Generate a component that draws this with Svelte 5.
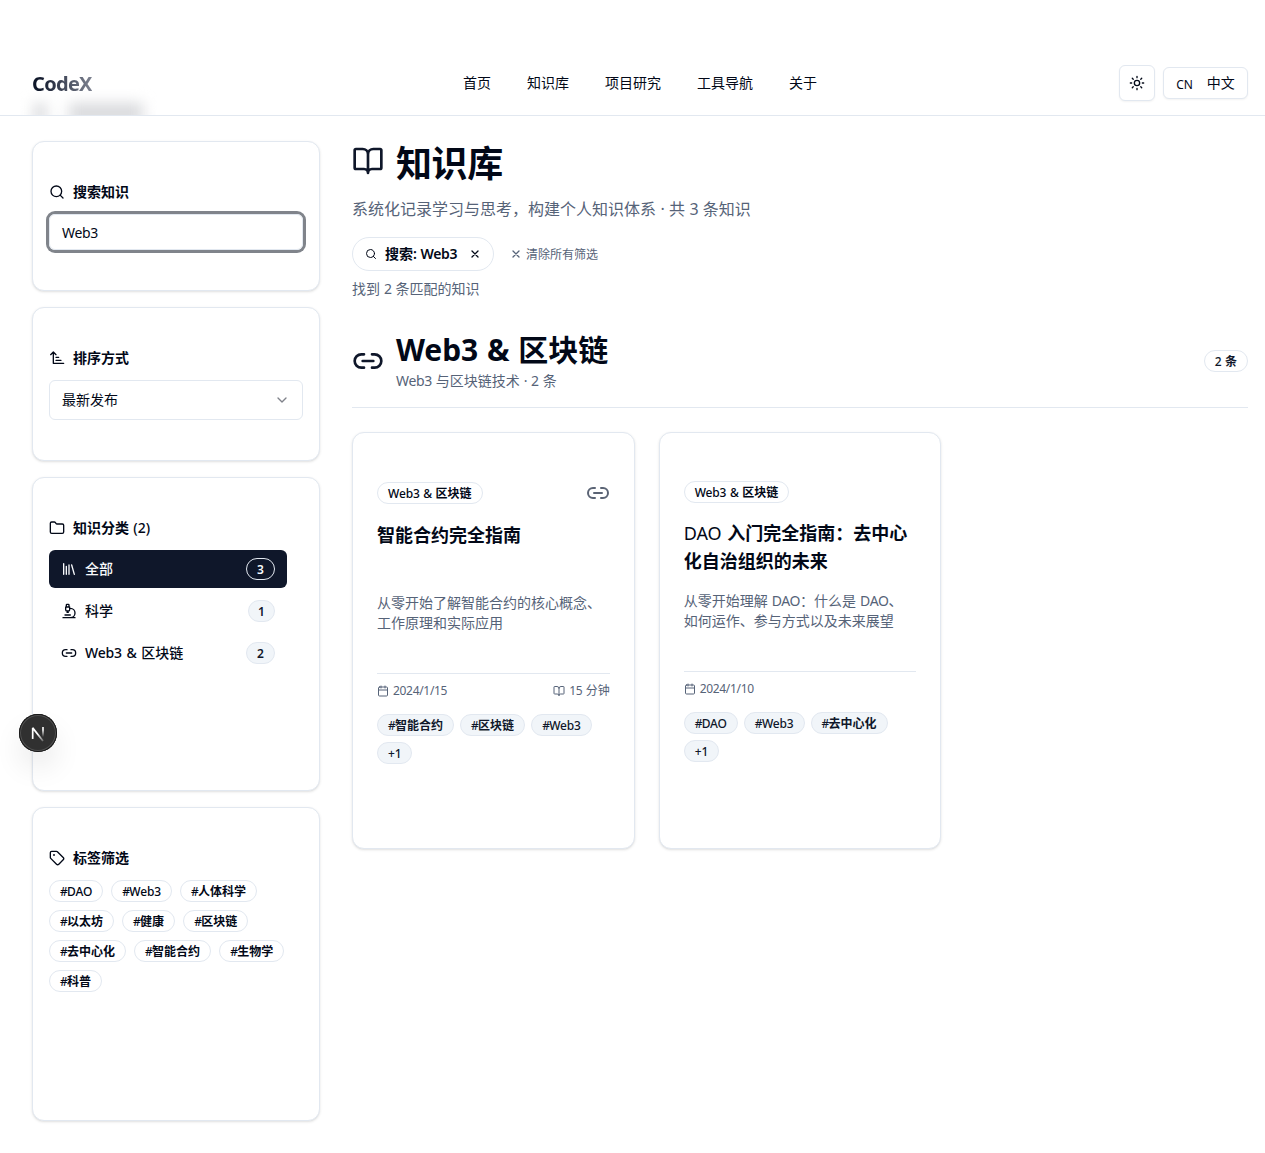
<script>
  const nav = ['首页', '知识库', '项目研究', '工具导航', '关于'];
  const categories = [
    { icon: 'library', label: '全部', count: '3', active: true },
    { icon: 'microscope', label: '科学', count: '1' },
    { icon: 'link', label: 'Web3 & 区块链', count: '2' }
  ];
  const tags = ['#DAO', '#Web3', '#人体科学', '#以太坊', '#健康', '#区块链', '#去中心化', '#智能合约', '#生物学', '#科普'];
  const articles = [
    {
      category: 'Web3 & 区块链',
      pinned: true,
      title: ['智能合约完全指南'],
      summary: ['从零开始了解智能合约的核心概念、', '工作原理和实际应用'],
      date: '2024/1/15',
      minutes: '15 分钟',
      tags: ['#智能合约', '#区块链', '#Web3', '+1']
    },
    {
      category: 'Web3 & 区块链',
      title: ['DAO 入门完全指南：去中心', '化自治组织的未来'],
      summary: ['从零开始理解 DAO：什么是 DAO、', '如何运作、参与方式以及未来展望'],
      date: '2024/1/10',
      tags: ['#DAO', '#Web3', '#去中心化', '+1']
    }
  ];

  // Splits a string into hash, Latin and Chinese runs so each gets its own weight and tracking.
  function runs(text) {
    return (text.match(/#|[\x00-\x22\x24-\x7f·]+|[^\x00-\x7f·]+/g) ?? []).map((value) => ({
      value,
      kind: value === '#' ? 'latin hash' : /^[\x00-\x7f·]/.test(value) ? 'latin' : 'han'
    }));
  }
</script>

{#snippet mix(text)}{#each runs(text) as run}<span class={run.kind}>{run.value}</span>{/each}{/snippet}

{#snippet icon(name, size)}
  <svg class="icon {name}" width={size} height={size} viewBox="0 0 24 24" fill="none" stroke="currentColor" stroke-width="2" stroke-linecap="round" stroke-linejoin="round" aria-hidden="true">
    {#if name === 'search'}
      <circle cx="11" cy="11" r="8" /><path d="m21 21-4.3-4.3" />
    {:else if name === 'sort'}
      <path d="M2.500 7 6.500 3 10.500 7M6.500 3v17H22M10.500 15.500H18M10.500 11h4" />
    {:else if name === 'folder'}
      <path d="M20 20a2 2 0 0 0 2-2V8a2 2 0 0 0-2-2h-7.900a2 2 0 0 1-1.690-.9L9.600 3.900A2 2 0 0 0 7.930 3H4a2 2 0 0 0-2 2v13a2 2 0 0 0 2 2Z" />
    {:else if name === 'library'}
      <path d="m16 6 4 14M12 6v14M8 8v12M4 4v16" />
    {:else if name === 'microscope'}
      <path d="M6 18h8M3 22h18M14 22a7 7 0 1 0 0-14h-1M9 14h2M9 12a2 2 0 0 1-2-2V6h6v4a2 2 0 0 1-2 2ZM12 6V3a1 1 0 0 0-1-1H9a1 1 0 0 0-1 1v3" />
    {:else if name === 'link'}
      <path d="M9 17H7A5 5 0 0 1 7 7h2M15 7h2a5 5 0 1 1 0 10h-2M8 12h8" />
    {:else if name === 'tag'}
      <path d="M12.586 2.586A2 2 0 0 0 11.172 2H4a2 2 0 0 0-2 2v7.172a2 2 0 0 0 .586 1.414l8.704 8.704a2.426 2.426 0 0 0 3.420 0l6.580-6.580a2.426 2.426 0 0 0 0-3.420z" /><circle cx="7.500" cy="7.500" r=".5" fill="currentColor" />
    {:else if name === 'book'}
      <path d="M12 7v14M3 18a1 1 0 0 1-1-1V4a1 1 0 0 1 1-1h5a4 4 0 0 1 4 4 4 4 0 0 1 4-4h5a1 1 0 0 1 1 1v13a1 1 0 0 1-1 1h-6a3 3 0 0 0-3 3 3 3 0 0 0-3-3z" />
    {:else if name === 'x'}
      <path d="M18 6 6 18M6 6l12 12" />
    {:else if name === 'calendar'}
      <path d="M8 2v4M16 2v4M3 10h18" /><rect x="3" y="4" width="18" height="18" rx="2" />
    {:else if name === 'chevron'}
      <path d="m6 9 6 6 6-6" />
    {:else if name === 'sun'}
      <circle cx="12" cy="12" r="4" /><path d="M12 2v2M12 20v2M4.930 4.930l1.410 1.410M17.660 17.660l1.410 1.410M2 12h2M20 12h2M6.340 17.660l-1.410 1.410M19.070 4.930l-1.410 1.410" />
    {/if}
  </svg>
{/snippet}

<div class="page">
  <header>
    <div class="haze"><i></i><i class="wide"></i></div>
    <div class="bar">
      <div class="brand">CodeX</div>
      <nav>
        {#each nav as item}<a href="#top">{item}</a>{/each}
      </nav>
      <div class="tools">
        <button class="theme" aria-label="theme">{@render icon('sun', 16)}</button>
        <button class="lang"><span class="cn">CN</span><span>中文</span></button>
      </div>
    </div>
  </header>

  <div class="layout">
    <aside>
      <section class="panel short">
        <h3>{@render icon('search', 16)}<span>搜索知识</span></h3>
        <div class="field">{@render mix('Web3')}</div>
      </section>
      <section class="panel mid">
        <h3>{@render icon('sort', 16)}<span>排序方式</span></h3>
        <div class="select"><span>最新发布</span>{@render icon('chevron', 16)}</div>
      </section>
      <section class="panel">
        <h3>{@render icon('folder', 16)}<span>{@render mix('知识分类 (2)')}</span></h3>
        <div class="cats">
          {#each categories as cat}
            <button class="cat" class:active={cat.active}>
              {@render icon(cat.icon, 16)}
              <span class="label">{@render mix(cat.label)}</span>
              <span class="count" class:narrow={cat.count === '1'}>{cat.count}</span>
            </button>
          {/each}
        </div>
      </section>
      <section class="panel">
        <h3>{@render icon('tag', 16)}<span>标签筛选</span></h3>
        <div class="tags">
          {#each tags as tag}<span class="pill">{@render mix(tag)}</span>{/each}
        </div>
      </section>
    </aside>

    <main>
      <div class="title">{@render icon('book', 32)}<h1>知识库</h1></div>
      <p class="intro">{@render mix('系统化记录学习与思考，构建个人知识体系 · 共 3 条知识')}</p>
      <div class="filters">
        <span class="chip">{@render icon('search', 12)}<span class="term">{@render mix('搜索: Web3')}</span>{@render icon('x', 12)}</span>
        <span class="clear">{@render icon('x', 12)}<span>清除所有筛选</span></span>
      </div>
      <p class="found">{@render mix('找到 2 条匹配的知识')}</p>

      <div class="group">
        {@render icon('link', 32)}
        <div class="names">
          <h2>{@render mix('Web3 & 区块链')}</h2>
          <p>{@render mix('Web3 与区块链技术 · 2 条')}</p>
        </div>
        <span class="pill">{@render mix('2 条')}</span>
      </div>

      <div class="grid">
        {#each articles as article}
          <article>
            <div class="head">
              <span class="pill">{@render mix(article.category)}</span>
              {#if article.pinned}{@render icon('link', 24)}{/if}
            </div>
            <h4>{#each article.title as line}<div>{@render mix(line)}</div>{/each}</h4>
            <div class="summary">{#each article.summary as line}<div>{@render mix(line)}</div>{/each}</div>
            <div class="meta">
              <span>{@render icon('calendar', 12)}<span>{@render mix(article.date)}</span></span>
              {#if article.minutes}<span>{@render icon('book', 12)}<span>{@render mix(article.minutes)}</span></span>{/if}
            </div>
            <div class="tags tight">
              {#each article.tags as tag}<span class="pill soft">{@render mix(tag)}</span>{/each}
            </div>
          </article>
        {/each}
      </div>
    </main>
  </div>

  <div class="dev">
    <svg width="38" height="38" viewBox="0 0 38 38" fill="none" aria-hidden="true">
      <defs>
        <linearGradient id="fade" x1="0" y1="13" x2="0" y2="23" gradientUnits="userSpaceOnUse">
          <stop offset="0.3" stop-color="#fff" /><stop offset="1" stop-color="#fff" stop-opacity="0" />
        </linearGradient>
        <linearGradient id="tail" x1="20" y1="19" x2="25" y2="26" gradientUnits="userSpaceOnUse">
          <stop offset="0" stop-color="#fff" /><stop offset="1" stop-color="#fff" stop-opacity="0.3" />
        </linearGradient>
      </defs>
      <path d="M13.700 25V13.900L24 27" stroke="url(#tail)" stroke-width="1.700" stroke-linejoin="bevel" />
      <path d="M24 13v10" stroke="url(#fade)" stroke-width="1.600" />
    </svg>
  </div>
</div>

<style>
  :global(body) { background: #fff; }
  .page {
    --line: #e2e8f0;
    --muted: #566378;
    position: relative;
    height: 1153px;
    overflow: hidden;
    color: #020817;
    font: 14px/20px 'Noto Sans', 'Noto Sans CJK SC', sans-serif;
  }
  .page * { box-sizing: border-box; }
  h1, h2, h3, h4, p { margin: 0; }
  button { font: inherit; color: inherit; background: #fff; }
  span { white-space: nowrap; }
  .icon { flex: none; display: block; }
  .latin { letter-spacing: -0.026em; word-spacing: 0.05em; white-space: pre; }

  header { position: relative; height: 116px; padding-top: 51px; border-bottom: 1px solid var(--line); overflow: hidden; }
  .haze { position: absolute; left: 33px; top: 103px; display: flex; gap: 22px; filter: blur(7px); }
  .haze i { width: 14px; height: 20px; background: #dcdde0; }
  .haze .wide { width: 74px; background: #d9dadd; }
  .bar { position: relative; width: 1216px; height: 64px; margin-left: 32px; display: flex; align-items: center; justify-content: space-between; }
  .brand {
    font: 700 20px/28px 'Noto Sans', sans-serif;
    letter-spacing: -0.7px;
    padding-top: 2px;
    background: linear-gradient(90deg, #0f172a 10%, #7d8290);
    -webkit-background-clip: text;
    background-clip: text;
    color: transparent;
  }
  nav { position: absolute; left: 431px; display: flex; gap: 36px; }
  nav a { color: inherit; text-decoration: none; }
  .tools { display: flex; align-items: center; gap: 8px; }
  .tools button { border: 1px solid var(--line); border-radius: 6px; padding: 0; display: flex; align-items: center; justify-content: center; box-shadow: 0 1px 2px rgb(0 0 0 / 0.05); }
  .theme { width: 36px; height: 36px; }
  .lang { width: 85px; height: 32px; gap: 14px; }
  .cn { font-size: 12px; padding-top: 3px; }

  .layout { width: 1216px; margin: 25px 0 0 32px; display: flex; gap: 32px; }
  aside { width: 288px; flex: none; display: flex; flex-direction: column; gap: 16px; }
  .panel, article { background: #fff; border: 1px solid var(--line); border-radius: 12px; box-shadow: 0 1px 3px rgb(0 0 0 / 0.1), 0 1px 2px -1px rgb(0 0 0 / 0.1); }
  .panel { height: 314px; padding: 40px 16px 0; }
  .panel.short { height: 150px; }
  .panel.mid { height: 154px; }
  h3 { display: flex; align-items: center; gap: 8px; margin-bottom: 12px; font-size: 14px; line-height: 20px; font-weight: 600; }
  h3 .latin { font-weight: 500; letter-spacing: 0; }
  .field { height: 36px; border: 1px solid var(--line); border-radius: 6px; padding: 8px 12px; line-height: 20px; box-shadow: 0 0 0 3px #80848b; }
  .select { height: 40px; border: 1px solid var(--line); border-radius: 6px; padding: 0 12px; display: flex; align-items: center; justify-content: space-between; }
  .select .icon { opacity: 0.5; }
  .cats { width: 238px; display: flex; flex-direction: column; gap: 4px; }
  .cat { height: 38px; border: 0; border-radius: 6px; padding: 0 12px; display: flex; align-items: center; gap: 8px; text-align: left; font-weight: 500; }
  .cat.active { background: #0f172a; color: #f8fafc; }
  .label { flex: 1; }
  .label .latin { letter-spacing: -0.012em; word-spacing: 0.075em; }
  .count { width: 29px; height: 22px; border: 1px solid var(--line); border-radius: 11px; background: #f1f5f9; color: #0f172a; font-size: 12px; line-height: 21px; font-weight: 600; text-align: center; }
  .count.narrow { width: 27px; }
  .active .count { background: transparent; color: #f8fafc; }
  .tags { display: flex; flex-wrap: wrap; gap: 8px; }
  .tags.tight { gap: 6px; }
  .pill { height: 22px; border: 1px solid var(--line); border-radius: 11px; padding: 1px 10px 0; font-size: 12px; line-height: 20px; font-weight: 600; }
  .pill .latin { font-weight: 500; letter-spacing: -0.012em; }
  .pill .hash { letter-spacing: -0.06em; }
  .pill.soft { background: #f1f5f9; color: #0f172a; }

  main { flex: 1; }
  .title { display: flex; gap: 12px; height: 40px; padding-top: 4px; color: #0f172a; }
  h1 { font-size: 36px; line-height: 38px; font-weight: 700; letter-spacing: -0.4px; color: #020817; }
  .intro { margin-top: 16px; font-size: 16px; line-height: 24px; color: var(--muted); }
  .filters { margin-top: 16px; display: flex; align-items: center; gap: 16px; }
  .filters .x { stroke-width: 2.6; }
  .chip { width: 142px; height: 34px; border: 1px solid var(--line); border-radius: 17px; padding: 0 12px; display: flex; align-items: center; font-weight: 600; }
  .term { margin-left: 8px; flex: 1; }
  .clear { display: flex; align-items: center; gap: 4px; font-size: 12px; color: var(--muted); }
  .clear span { padding-top: 1px; }
  .found { margin-top: 8px; color: var(--muted); }
  .group { margin-top: 31px; height: 78px; border-bottom: 1px solid var(--line); display: flex; align-items: flex-start; gap: 12px; color: #0f172a; }
  .group > .icon { margin-top: 15px; }
  .names { flex: 1; color: #020817; }
  h2 { font-size: 30px; line-height: 36px; font-weight: 700; margin-top: 2px; }
  h2 .latin { letter-spacing: -0.002em; word-spacing: 0.035em; }
  .names p { color: var(--muted); margin-top: 3px; }
  .group > .pill { margin-top: 20px; }
  .grid { margin-top: 24px; display: grid; grid-template-columns: repeat(3, 1fr); gap: 24px; }
  article { height: 417px; padding: 48px 24px 0; }
  .head { display: flex; align-items: center; justify-content: space-between; color: #020817; }
  .head .icon { color: #5b6475; }
  h4 { margin-top: 16px; min-height: 56px; font-size: 18px; line-height: 28px; font-weight: 600; }
  h4 .latin { font-weight: 400; letter-spacing: 0; }
  .summary { margin-top: 16px; min-height: 40px; color: var(--muted); }
  .meta { margin-top: 40px; border-top: 1px solid var(--line); height: 41px; padding-top: 9px; display: flex; justify-content: space-between; align-items: flex-start; font-size: 12px; line-height: 16px; color: var(--muted); }
  .meta > span { display: flex; align-items: center; gap: 4px; }

  .dev { position: absolute; left: 19px; top: 714px; width: 38px; height: 38px; border-radius: 50%; background: #303030; box-shadow: inset 0 0 0 1px #171717, inset 0 0 0 2px #505050, 0 16px 32px -8px rgb(0 0 0 / 0.24); }
  .dev svg { display: block; }
</style>
